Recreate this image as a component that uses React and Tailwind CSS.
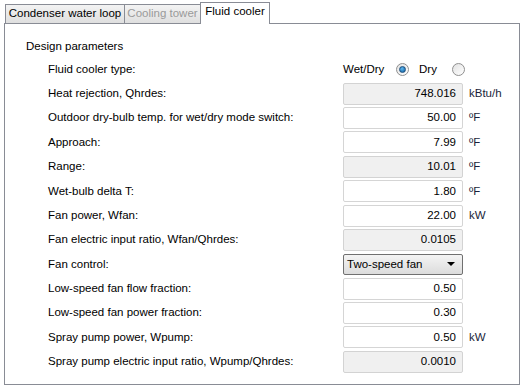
const rows = [
    { label: 'Heat rejection, Qhrdes:', value: '748.016', unit: 'kBtu/h', disabled: true },
    { label: 'Outdoor dry-bulb temp. for wet/dry mode switch:', value: '50.00', unit: 'ºF' },
    { label: 'Approach:', value: '7.99', unit: 'ºF' },
    { label: 'Range:', value: '10.01', unit: 'ºF', disabled: true },
    { label: 'Wet-bulb delta T:', value: '1.80', unit: 'ºF' },
    { label: 'Fan power, Wfan:', value: '22.00', unit: 'kW' },
    { label: 'Fan electric input ratio, Wfan/Qhrdes:', value: '0.0105', disabled: true },
    { label: 'Fan control:', select: 'Two-speed fan' },
    { label: 'Low-speed fan flow fraction:', value: '0.50' },
    { label: 'Low-speed fan power fraction:', value: '0.30' },
    { label: 'Spray pump power, Wpump:', value: '0.50', unit: 'kW' },
    { label: 'Spray pump electric input ratio, Wpump/Qhrdes:', value: '0.0010', disabled: true },
];

const Radio = ({ checked }) => (
    <span className="w-[13px] h-[13px] shrink-0 rounded-full border border-[#8f8f8f] bg-gradient-to-br from-[#e2e2e2] to-[#ffffff] flex items-center justify-center">
        {checked && (
            <span className="w-[7px] h-[7px] rounded-full bg-[radial-gradient(circle_at_40%_35%,#5fb8f0,#0a5a9c)] border border-[#1d4f7c]" />
        )}
    </span>
);

const Tab = ({ children, active, disabled, width }) => (
    <div
        className={`
            ${width} h-[19px] flex items-center justify-center border border-[#898c95] border-b-0 -mr-px
            ${active ? 'h-[22px] bg-white z-10 mb-[-1px] pb-[3px]' : 'bg-gradient-to-b from-[#f3f3f3] to-[#dfdfdf]'}
            ${disabled ? 'text-[#9a9a9a]' : 'text-black'}
        `}
    >
        {children}
    </div>
);

export default function App() {
    return (
        <div className="w-[526px] h-[390px] bg-white pt-[2px] pl-[4px] text-[11.5px] text-black font-['Liberation_Sans',Arial,sans-serif]">
            {/* Tab strip */}
            <div className="flex items-end h-[21px] pl-[1px]">
                <Tab width="w-[120px]">Condenser water loop</Tab>
                <Tab width="w-[77px]" disabled>Cooling tower</Tab>
                <Tab width="w-[70px]" active>Fluid cooler</Tab>
            </div>

            {/* Panel */}
            <div className="w-[516px] h-[362px] border border-[#898c95] bg-white pl-[21px] pt-[15px]">
                <div className="h-[14px] leading-[14px]">Design parameters</div>

                <div className="pl-[22px] pt-[4px] flex flex-col">
                    {/* Fluid cooler type */}
                    <div className="h-[24.4px] flex items-center">
                        <span className="w-[295px]">Fluid cooler type:</span>
                        <span className="w-[53px]">Wet/Dry</span>
                        <Radio checked />
                        <span className="ml-[10px] w-[33px]">Dry</span>
                        <Radio />
                    </div>

                    {rows.map((row) => (
                        <div key={row.label} className="h-[24.4px] flex items-center">
                            <span className="w-[295px] whitespace-nowrap">{row.label}</span>
                            {row.select ? (
                                <div className="w-[120px] h-[21px] rounded-[2px] border border-[#707070] bg-gradient-to-b from-[#f4f4f4] to-[#dcdcdc] flex items-center justify-between pl-[3px] pr-[7px]">
                                    <span>{row.select}</span>
                                    <span className="w-0 h-0 border-l-[4px] border-r-[4px] border-t-[4px] border-l-transparent border-r-transparent border-t-black" />
                                </div>
                            ) : (
                                <div
                                    className={`w-[120px] h-[22px] rounded-[2px] border flex items-center justify-end pr-[6px] ${row.disabled ? 'bg-[#f0f0f0] border-[#d3d3d3]' : 'bg-white border-[#d5d5d5]'}`}
                                >
                                    {row.value}
                                </div>
                            )}
                            {row.unit && <span className="ml-[6px] text-[#1a1f3a]">{row.unit}</span>}
                        </div>
                    ))}
                </div>
            </div>
        </div>
    );
}
